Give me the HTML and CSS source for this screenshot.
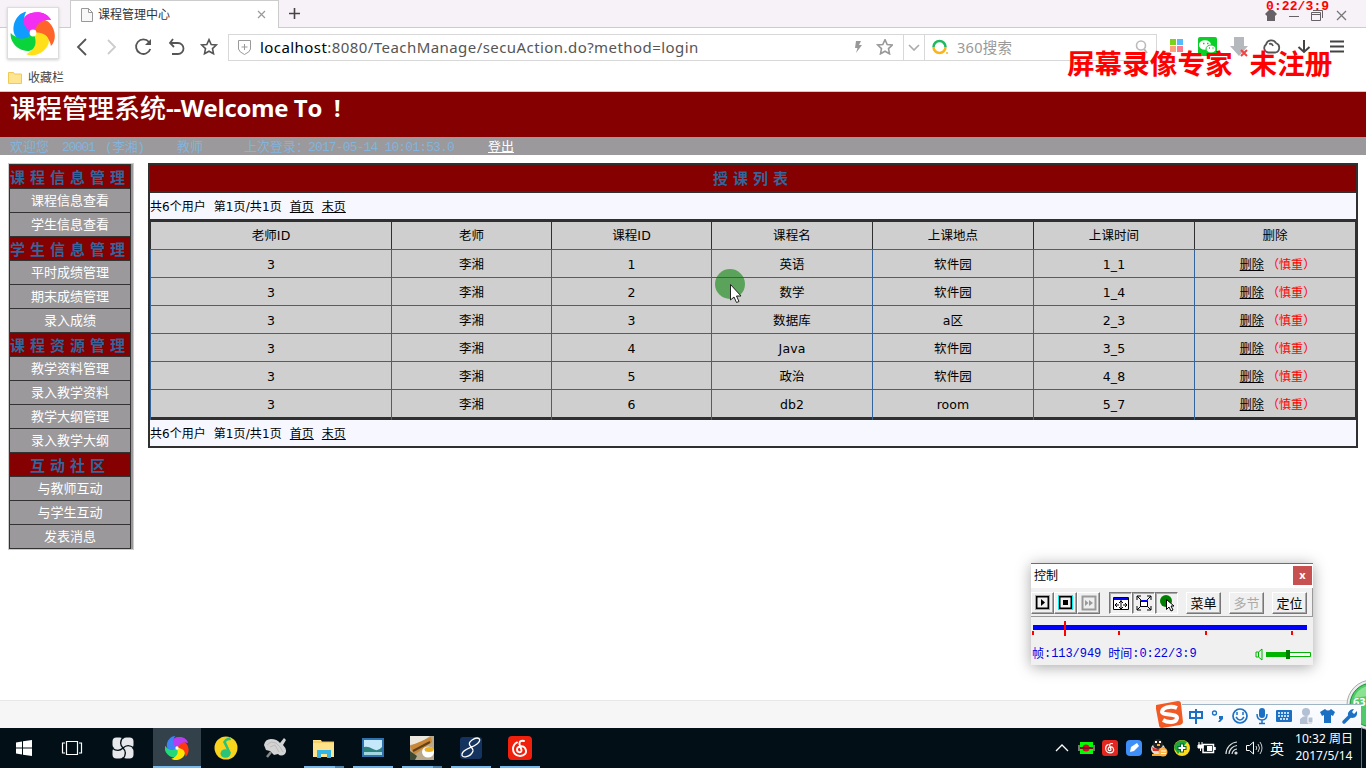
FILE: index.html
```html
<!DOCTYPE html>
<html lang="zh-CN">
<head>
<meta charset="utf-8">
<title>课程管理中心</title>
<link rel="stylesheet" href="styles.css">
</head>
<body>
<svg class="defs" aria-hidden="true">
  <defs>
    <path id="petal" d="M0 0C-8-3-13-13-6-18C2-23 14-21 18-13C10-15 4-9 0 0Z"/>
    <path id="star" d="M0-7.3L2.2-2.5L7.3-2L3.5 1.6L4.5 6.8L0 4.2L-4.5 6.8L-3.5 1.6L-7.3-2L-2.2-2.5Z" fill="none" stroke-width="1.6"/>
    <g id="note"><path d="M4-7C-1-8-1-5 0-2L1.500 2C2 5-3 5-3 1.500C-3-2 3-3 5 0C8 5 4 8 0 8C-5 8-7 4-7 1C-7-2-5-5-3-5.500" fill="none" stroke="#fff" stroke-width="1.900" stroke-linecap="round"/></g>
  </defs>
</svg>

<header class="browser">
  <div class="logo">
    <svg width="46" height="46" viewBox="-23 -23 46 46">
      <use href="#petal" fill="#ff22ee"/><use href="#petal" fill="#ff6428" transform="rotate(72)"/>
      <use href="#petal" fill="#ffe01b" transform="rotate(144)"/>
      <use href="#petal" fill="#09d43c" transform="rotate(216)"/><use href="#petal" fill="#109cff" transform="rotate(288)"/>
      <path d="M0 0C-8-3-13-13-6-18C2-23 14-21 18-13Q6-15 0 0Z" fill="#f22ef3"/><circle r="3.400" fill="#fff"/>
    </svg>
  </div>
  <div class="tabstrip">
    <div class="tab">
      <svg width="12" height="14" viewBox="0 0 12 14"><path d="M.5.500H7.500L11.500 4.500V13.500H.500ZM7.500.500V4.500H11.500" fill="#f8f8f8" stroke="#999"/></svg>
      <span class="tab-title">课程管理中心</span>
      <svg class="tab-close" width="9" height="9" viewBox="0 0 9 9"><path d="M1 1L8 8M8 1L1 8" stroke="#999" stroke-width="1.200"/></svg>
    </div>
    <svg class="plus" width="11" height="11" viewBox="0 0 11 11"><path d="M5.500 0V11M0 5.500H11" stroke="#444" stroke-width="1.600"/></svg>
    <div class="winctl">
      <svg width="80" height="12" viewBox="0 0 80 12"><path d="M4 0H8L12 4L10 6V11H2V6L0 4Z" fill="#656167"/><path d="M24 6.500H34M46.500 2.500H55.500V10.500H46.500ZM46.500 4.500H55M48 .500H57.500V8" fill="none" stroke="#656167"/><path d="M72 1L81 10M81 1L72 10" stroke="#777" stroke-width="1.300"/></svg>
    </div>
  </div>
  <div class="navrow">
    <svg class="navicons" width="144" height="20" viewBox="0 0 144 20" fill="none" stroke="#555" stroke-width="1.800">
      <path d="M10 2L2 10L10 18"/><path d="M32 3L39 10L32 17" stroke="#ccc"/>
      <path d="M73 5A7.300 7.300 0 1 0 74.300 12"/><path d="M75 2V8H69Z" fill="#555" stroke="none"/>
      <path d="M97 2L94 6L98 10M94 6H102A5.500 5.500 0 0 1 102 17H96"/>
      <use href="#star" x="133" y="10"/>
    </svg>
    <div class="address">
      <svg width="13" height="15" viewBox="0 0 13 15"><path d="M.5.500H12.500V9Q12 12 6.500 14.500Q1 12 .500 9ZM6.500 4V10M3.500 7H9.500" fill="none" stroke="#999"/></svg>
      <span class="url">localhost<i>:8080/TeachManage/secuAction.do?method=login</i></span>
      <svg class="addr-icons" width="40" height="16" viewBox="0 0 40 16"><path d="M3 2H8L6 6H9L3 14L4.500 9H2Z" fill="#999"/><use href="#star" x="32" y="8" stroke="#999"/></svg>
      <div class="drop"><svg width="12" height="7" viewBox="0 0 12 7"><path d="M1 1L6 6L11 1" fill="none" stroke="#aaa" stroke-width="1.600"/></svg></div>
      <svg class="so" width="17" height="16" viewBox="0 0 17 16" fill="none" stroke-width="2.500"><path d="M1.500 8A6 6 0 0 1 13.500 8" stroke="#20b960"/><path d="M13.500 8A6 6 0 0 1 1.500 8" stroke="#fbb51b"/><circle cx="15" cy="14" r="1" fill="#fbb51b" stroke="none"/></svg>
      <span class="search">360搜索</span>
      <svg class="mag" width="13" height="14" viewBox="0 0 13 14"><circle cx="6" cy="5.500" r="4.500" fill="none" stroke="#bbb" stroke-width="1.600"/><path d="M9 9L12 13" stroke="#bbb" stroke-width="2"/></svg>
    </div>
    <svg class="ext" width="176" height="22" viewBox="0 0 176 22">
      <path d="M1 3H7V9H1Z" fill="#79d31b"/><path d="M8 3H14V9H8Z" fill="#56baff"/><path d="M1 10H7V16H1Z" fill="#ffa37c"/><path d="M8 10H14V16H8Z" fill="#ff7a8c"/>
      <rect x="29" y="1" width="19" height="19" rx="2" fill="#0bcf28"/><ellipse cx="36" cy="9" rx="6" ry="4.800" fill="#fff"/><ellipse cx="42" cy="13" rx="5" ry="4" fill="#fff" stroke="#0bcf28"/><path d="M34 7.500H35.500M38 7.500H39.500M40 12H41M43.500 12H44.500" stroke="#0bcf28" stroke-width="1.500"/>
      <path d="M65 1H75V10H79L70 20L61 10H65Z" fill="#b5b9bd"/><path d="M72 14L78 20M78 14L72 20" stroke="#e44" stroke-width="2"/>
      <path d="M99 16.500A4.500 4.500 0 0 1 97 8.500A5.500 5.500 0 0 1 107 7A5 5 0 0 1 106.500 16.500ZM100 8Q103 7 104 10" fill="none" stroke="#555" stroke-width="1.800"/>
      <path d="M135 4V16M129.500 11L135 16L140.500 11" fill="none" stroke="#444" stroke-width="2"/>
      <path d="M161 5.500H175M161 10.500H175M161 15.500H175" stroke="#444" stroke-width="2"/>
    </svg>
  </div>
  <div class="bookmarks">
    <svg width="14" height="12" viewBox="0 0 14 12"><path d="M.500.500H5.500L6.500 2H13.500V11.500H.500Z" fill="#ffe491" stroke="#f0c956"/></svg>
    <span>收藏栏</span>
  </div>
  <div class="timer">0:22/3:9</div>
  <div class="watermark"><span>屏幕录像专家</span><span>未注册</span></div>
</header>

<div class="title"><h1>课程管理系统<b>--Welcome To</b><em>!</em></h1></div>
<div class="userbar"><span class="u1">欢迎您</span><span class="u2">20001</span><span class="u3">(李湘)</span><span class="u4">教师</span><span class="u5">上次登录：</span><span class="u6">2017-05-14 10:01:53.0</span><a>登出</a></div>

<main class="body">
  <nav class="side"><div class="side-in">
    <h2>课程信息管理</h2><a>课程信息查看</a><a>学生信息查看</a>
    <h2>学生信息管理</h2><a>平时成绩管理</a><a>期末成绩管理</a><a>录入成绩</a>
    <h2>课程资源管理</h2><a>教学资料管理</a><a>录入教学资料</a><a>教学大纲管理</a><a>录入教学大纲</a>
    <h2>互动社区</h2><a>与教师互动</a><a>与学生互动</a><a>发表消息</a>
  </div></nav>
  <section class="panel">
    <h2>授课列表</h2>
    <div class="pager"><span>共6个用户</span><span>第1页/共1页</span><u>首页</u><u>末页</u></div>
    <div class="grid">
      <div class="row head"><span>老师ID</span><span>老师</span><span>课程ID</span><span>课程名</span><span>上课地点</span><span>上课时间</span><span>删除</span></div>
      <div class="row"><span>3</span><span>李湘</span><span>1</span><span>英语</span><span>软件园</span><span>1_1</span><span><u>删除</u><em>（慎重）</em></span></div>
      <div class="row"><span>3</span><span>李湘</span><span>2</span><span>数学</span><span>软件园</span><span>1_4</span><span><u>删除</u><em>（慎重）</em></span></div>
      <div class="row"><span>3</span><span>李湘</span><span>3</span><span>数据库</span><span>a区</span><span>2_3</span><span><u>删除</u><em>（慎重）</em></span></div>
      <div class="row"><span>3</span><span>李湘</span><span>4</span><span>Java</span><span>软件园</span><span>3_5</span><span><u>删除</u><em>（慎重）</em></span></div>
      <div class="row"><span>3</span><span>李湘</span><span>5</span><span>政治</span><span>软件园</span><span>4_8</span><span><u>删除</u><em>（慎重）</em></span></div>
      <div class="row"><span>3</span><span>李湘</span><span>6</span><span>db2</span><span>room</span><span>5_7</span><span><u>删除</u><em>（慎重）</em></span></div>
    </div>
    <div class="pager"><span>共6个用户</span><span>第1页/共1页</span><u>首页</u><u>末页</u></div>
  </section>
</main>

<svg class="pointer" width="32" height="36" viewBox="0 0 32 36"><circle cx="15" cy="15" r="15" fill="rgba(0,128,0,.56)"/><path d="M15.500 15.500V31L19 28L21.500 33.500L24 32.500L21.500 27H26Z" fill="#fff" stroke="#222"/></svg>

<aside class="control">
  <div class="ctl-title"><span>控制</span><b>x</b></div>
  <div class="ctl-tools">
    <i class="btn"><svg width="15" height="15"><rect x=".5" y=".5" width="14" height="14" fill="#f0f0f0" stroke="#0ee"/><rect x="1.750" y="1.750" width="11.500" height="11.500" fill="none" stroke="#000" stroke-width="1.500"/><path d="M6 4L10 7.500L6 11Z"/></svg></i>
    <i class="btn"><svg width="15" height="15"><rect x=".5" y=".5" width="14" height="14" fill="#f0f0f0" stroke="#0ee"/><rect x="1.750" y="1.750" width="11.500" height="11.500" fill="none" stroke="#000" stroke-width="1.500"/><path d="M5 5H10V10H5Z"/></svg></i>
    <i class="btn"><svg width="16" height="16"><rect x="1.500" y="1.500" width="13" height="13" fill="#eee" stroke="#999" stroke-width="2"/><path d="M4 5L7.500 8L4 11ZM8 5L12 8L8 11Z" fill="#999"/></svg></i>
    <i class="btn down gap"><svg width="16" height="14"><path d="M.500 1.500H15.500V13.500H.500Z" fill="#fff" stroke="#000"/><path d="M1 2H15V4H1Z" fill="#00f"/><path d="M2 9H6M10 9H14M8 4V13M4 7L2 9L4 11M12 7L14 9L12 11M6 7L8 5L10 7M6 11L8 13L10 11" fill="none" stroke="#000"/></svg></i>
    <i class="btn down"><svg width="16" height="16"><path d="M1 5V1H5M11 1H15V5M15 11V15H11M5 15H1V11M1 1L5 5M15 1L11 5M1 15L5 11M15 15L11 11" fill="none" stroke="#000"/><path d="M4.500 5.500H11.500V11.500H4.500Z" fill="#fff" stroke="#000"/><path d="M5 5H11V7H5Z" fill="#00f"/></svg></i>
    <i class="btn down"><svg width="18" height="18"><circle cx="8" cy="7" r="6" fill="green"/><path d="M8.500 5.500V15.500L11 13L13 17L15 16L13 12H16Z" fill="#fff" stroke="#000"/></svg></i>
    <i class="btn wide">菜单</i><i class="btn wide off">多节</i><i class="btn wide">定位</i>
  </div>
  <svg class="track" width="282" height="19" viewBox="0 0 282 19"><path d="M2 8H276V13H2Z" fill="#00f"/><path d="M33 4H35V19H33ZM1 14H3V18H1ZM87 14H89V18H87ZM174 14H176V18H174ZM260 14H262V18H260Z" fill="red"/></svg>
  <div class="ctl-foot"><span>帧</span><code>:113/949</code><span class="tm">时间</span><code>:0:22/3:9</code>
    <svg width="56" height="13" viewBox="0 0 56 13"><path d="M1 4H3.500V9H1ZM3.500 4L7 1V12L3.500 9" fill="none" stroke="#00b400"/><path d="M11 4H33V9H11Z" fill="#00b400"/><path d="M33 4.500H55.500V8.500H33" fill="#fff" stroke="#00b400"/><path d="M31 2H35V11H31Z" fill="#008000"/></svg>
  </div>
</aside>

<svg class="ball" width="20" height="52" viewBox="0 0 20 52"><circle cx="26" cy="26" r="25" fill="#eee" stroke="#aaa"/><circle cx="26" cy="26" r="22" fill="#50ca68" stroke="#189333"/><path d="M8 19A19 19 0 0 1 22 7V17Z" fill="#8be391"/><text x="7" y="27" class="ball-text">63</text></svg>
<div class="status"></div>
<div class="ime">
  <svg width="206" height="30" viewBox="0 0 206 30">
    <path d="M1 5L23 1Q26 1 26 4L28 22Q28 24 25 25L7 28Q4 28 4 25L1 9Z" fill="#f15a24"/><path d="M22 8C15 5 7 8 7 12C8 16 22 13 22 18C21 23 13 23 8 20" fill="none" stroke="#fff" stroke-width="4"/>
    <path d="M35 12H47V18H35ZM41 9V24" fill="none" stroke="#1c70c4" stroke-width="2"/>
    <circle cx="59.500" cy="13" r="2" fill="none" stroke="#1c70c4" stroke-width="1.300"/><path d="M64 16H68V19L65 22H63L65 19H64Z" fill="#1c70c4"/>
    <circle cx="85" cy="16" r="7" fill="none" stroke="#1c70c4" stroke-width="1.700"/><path d="M82 12V15M88 12V15M81 17Q85 23 89 17" fill="none" stroke="#1c70c4" stroke-width="1.500"/>
    <rect x="104" y="8" width="6" height="10" rx="3" fill="#1c70c4"/><path d="M102 14Q102 20 107 20Q112 20 112 14M107 20V24M104 23.500H110" fill="none" stroke="#1c70c4" stroke-width="1.500"/>
    <rect x="121" y="10" width="16" height="12" rx="1" fill="#1c70c4"/><path d="M123 13H135M123 16H135M125 19H133" stroke="#fff" stroke-width="1.500" stroke-dasharray="2 1"/>
    <circle cx="151" cy="12" r="4" fill="#b3bfd3"/><path d="M145 24V19Q151 13 157 19V24Z" fill="#b3bfd3"/><path d="M153 17H158V23H153Z" fill="#b3bfd3" stroke="#fff"/>
    <path d="M170 9Q173 12 176 9L180 12L178 16L176 15V23H169V15L167 16L165 12Z" fill="#1c70c4"/>
    <path d="M189 22L196 15" stroke="#1c70c4" stroke-width="3.500" stroke-linecap="round"/><path d="M199 9L197 12L199 14L202 11Q203 18 197 18Q192 17 193 13Q195 9 199 9Z" fill="#1c70c4"/>
  </svg>
</div>

<footer class="taskbar">
  <div class="task"><svg viewBox="-12 -12 24 24"><path d="M-8-5.500L-2-6.500V-.500H-8ZM-1-6.700L8-8V-.500H-1ZM-8 .500H-2V6.500L-8 5.500ZM-1 .500H8V8L-1 6.700Z" fill="#fff"/></svg></div>
  <div class="task"><svg viewBox="-12 -12 24 24" fill="none" stroke="#fff" stroke-width="1.200"><path d="M-5.500-6.500H5.500V6.500H-5.500ZM-7-5H-9.500V5H-7M7-5H9.500V5H7"/></svg></div>
  <div class="task t3"><svg viewBox="-12 -12 24 24" fill="#e7e8ec"><rect x="-10.500" y="-10.500" width="11" height="11" rx="4"/><rect x="-.5" y="-10.500" width="11" height="11" rx="4"/><rect x="-10.500" y="-.5" width="11" height="11" rx="4"/><rect x="-.5" y="-.5" width="11" height="11" rx="4"/><path d="M0 0C-3-3-3-7 0-11M0 0C3-3 7-3 11 0M0 0C3 3 3 7 0 11M0 0C-3 3-7 3-11 0" fill="none" stroke="#020f17" stroke-width="1.300"/></svg></div>
  <div class="task active"><svg viewBox="-22 -22 44 44"><g transform="rotate(10)"><use href="#petal" fill="#b83df0"/><use href="#petal" fill="#ff3811" transform="rotate(72)"/><use href="#petal" fill="#ffe500" transform="rotate(144)"/><use href="#petal" fill="#22d878" transform="rotate(216)"/><use href="#petal" fill="#3d83f5" transform="rotate(288)"/><path d="M0 0C-8-3-13-13-6-18C2-23 14-21 18-13Q6-15 0 0Z" fill="#b83df0"/></g><circle r="3" fill="#fff"/></svg></div>
  <div class="task"><svg viewBox="-12 -12 24 24"><circle r="11.500" fill="#f9d31c"/><ellipse cx="-.5" cy="5.500" rx="5" ry="4.300" fill="#2bc37a"/><path d="M3 6L-3-6Q-1-10 4-11L5-8Q1-8 0-6L5 5Z" fill="#2bc37a"/></svg></div>
  <div class="task"><svg viewBox="-12 -12 24 24"><path d="M-11-3Q-10-9-4-9Q2-9 5-5L9-10L11-8L8-3Q13 2 10 6Q6 9 3 6L-1 7L-5 3L-9 2Z" fill="#d4d3d3"/><path d="M-8-3L-4-6L1-5L5-1L8 4M-5-1L0-3L4 4" fill="none" stroke="#bbb"/><path d="M-4 4L-8 9" stroke="#888" stroke-width="2.500"/></svg></div>
  <div class="task run split"><svg viewBox="-12 -12 24 24"><path d="M-11-8H-3L-2-6H10V9H-11Z" fill="#ffe38a"/><path d="M-11-6H10" stroke="#f0bd48"/><path d="M-7 10V2H7V10H3V6H-3V10Z" fill="#35b4e8"/></svg></div>
  <div class="task run"><svg viewBox="-12 -12 24 24"><path d="M-11-10H11V9H-11Z" fill="#2e73ae"/><path d="M-9-8H9V7H-9Z" fill="#c6e8fb"/><path d="M-9-1Q-5-2 0 1T9-1V7H-9Z" fill="#2d827d"/><path d="M-9 4H9V7H-9Z" fill="#a4d6df"/></svg></div>
  <div class="task run split"><svg viewBox="-12 -12 24 24"><path d="M-12-12H12V12H-12Z" fill="#b9a889"/><path d="M-12-12H8L-2-5L-12-3Z" fill="#ece8df"/><path d="M-12-2L9-11L10-6L-8 7Z" fill="#ca8735"/><path d="M-9 3L8-6" stroke="#62401d" stroke-width="2"/><ellipse cx="6" cy="4" rx="6" ry="5.500" fill="#fff"/><ellipse cx="7" cy="1.500" rx="4.500" ry="2.500" fill="#e9b024"/><path d="M-12 3L-5 8L-7 12H-12Z" fill="#3d4932"/></svg></div>
  <div class="task run"><svg viewBox="-12 -12 24 24"><rect x="-11" y="-11" width="22" height="22" rx="3" fill="#14335e"/><path d="M6-4C12-9 7-12 1-8C-6-3 3-1 2 3C0 9-10 11-9 6C-8 1 1 0 6-4Z" fill="none" stroke="#fff" stroke-width="1.300"/></svg></div>
  <div class="task run"><svg viewBox="-12 -12 24 24"><rect x="-12" y="-12" width="24" height="24" rx="4" fill="#f1200c"/><use href="#note"/></svg></div>
  <div class="tray">
    <svg width="210" height="24" viewBox="0 0 210 24">
      <path d="M2 15L8 9L14 15" fill="none" stroke="#fff" stroke-width="1.300"/>
      <path d="M24 9H41V15H24Z" fill="#777"/><path d="M26 6H39V18H26Z" fill="#0f0"/><circle cx="32" cy="12" r="3.500" fill="#e2002d"/><path d="M26 12H39" stroke="#7a1025" stroke-width="2"/>
      <rect x="48" y="4" width="16" height="16" rx="3" fill="#e12720"/><use href="#note" transform="translate(56 12) scale(.62)"/>
      <rect x="72" y="4" width="16" height="16" rx="4" fill="#3e8ff7"/><path d="M76 16L77 11L83 7L85 10L80 15Z" fill="#fff"/>
      <ellipse cx="104" cy="13" rx="7" ry="6" fill="#ddd"/><circle cx="104" cy="8" r="5" fill="#222"/><path d="M101 6H103M105 6H107" stroke="#fff" stroke-width="2"/><path d="M98 11Q104 15 110 11L109 15H99Z" fill="#e52b1c"/><path d="M98 19H110M103 9H106" stroke="#f9a728" stroke-width="2"/><circle cx="109" cy="16" r="4.500" fill="#ffb347"/><path d="M107 15H112M107 17.500H112" stroke="#fff"/>
      <circle cx="128" cy="12" r="8" fill="#ffd91c"/><path d="M120 12A8 8 0 0 1 133 6L124 18Z" fill="#1ca83a"/><path d="M128 7.500V16.500M123.500 12H132.500" stroke="#063" stroke-width="4"/><path d="M128 8.500V15.500M124.500 12H131.500" stroke="#fff" stroke-width="2"/>
      <path d="M149 8.500H159.500V16.500H149ZM161 11V14" fill="none" stroke="#fff" stroke-width="1.500"/><path d="M153 10H158V15H153Z" fill="#fff"/><path d="M145 6V9M148 6V9M144 9H149V12H144ZM146.500 12V15" stroke="#fff" fill="#fff"/>
      <g fill="none" stroke="#ddd" stroke-width="1.200"><path d="M172 18A12 12 0 0 1 183 6M175 18A9 9 0 0 1 183 9.500M178 18A6 6 0 0 1 183 13"/><circle cx="182" cy="17" r="1" fill="#fff"/></g>
      <path d="M192.500 9.500H195.500L199.500 6V18L195.500 14.500H192.500Z" fill="none" stroke="#fff"/><path d="M202 10Q203.500 12 202 14M204 8Q207 12 204 16M206 6Q210 12 206 18" fill="none" stroke="#ccc"/>
    </svg>
    <span class="lang">英</span>
    <div class="clock"><span>10:32 周日</span><span>2017/5/14</span></div>
    <div class="peek"></div>
  </div>
</footer>
</body>
</html>
```
FILE: styles.css
```css
* { box-sizing: border-box; }
body { margin: 0; width: 1366px; height: 768px; overflow: hidden; position: relative; display: flex; flex-direction: column; background: #fff; color: #000; font: 12px/16px "Noto Sans", "Noto Sans CJK SC", sans-serif; white-space: nowrap; }
svg { flex: none; display: block; }
i, em { font-style: normal; }
h1, h2 { margin: 0; }
.defs { position: absolute; width: 0; height: 0; }

.browser { position: relative; height: 92px; flex: none; border-bottom: 1px solid #ccc; }
.logo { position: absolute; z-index: 2; left: 7px; top: 7px; width: 52px; height: 52px; padding: 2px; background: #fff; border: 1px solid #ddd; box-shadow: 0 1px 3px #ccc; }
.tabstrip { display: flex; align-items: center; height: 28px; background: #f7f2f7; border-bottom: 1px solid #ccc; padding-left: 70px; }
.tab { display: flex; align-items: center; width: 209px; height: 28px; background: #fff; border: 1px solid #ccc; border-bottom: 0; padding: 1px 12px 0 10px; }
.tab-title { margin-left: 5px; color: #333; }
.tab-close { margin-left: auto; }
.plus { margin-left: 10px; }
.winctl { margin: 4px 21px 0 auto; }
.winctl svg { overflow: visible; }
.navrow { display: flex; align-items: center; height: 38px; padding-left: 76px; }
.address { display: flex; align-items: center; width: 929px; height: 27px; margin-left: 8px; border: 1px solid #d8d8d8; padding-left: 9px; }
.url { width: 480px; margin-left: 9px; font-size: 15px; line-height: 20px; letter-spacing: .435px; }
.url i { color: #555; }
.addr-icons { margin-left: 113px; }
.drop { display: flex; align-items: center; justify-content: center; width: 22px; height: 25px; margin-left: 10px; border: solid #d8d8d8; border-width: 0 1px; }
.so { margin-left: 7px; }
.search { margin-left: 8px; color: #999; font-size: 14.500px; line-height: 20px; letter-spacing: .300px; }
.mag { margin: 0 8px 0 auto; }
.ext { margin-left: 12px; }
.bookmarks { display: flex; align-items: center; height: 23px; padding-left: 8px; gap: 6px; color: #444; }
.timer { position: absolute; left: 1266px; top: -1px; color: red; font: bold 13px/16px "Liberation Mono", monospace; letter-spacing: .1px; }
.watermark { position: absolute; left: 1067px; top: 46px; display: flex; gap: 17px; color: red; font: bold 27.600px/32px "Noto Sans CJK SC", sans-serif; }

.title { flex: none; height: 45px; background: #850000; padding-left: 10px; color: #fff; }
.title h1 { display: flex; font: 500 26px/29px "Noto Sans CJK SC", sans-serif; }
.title b { font: bold 24px/32px "Open Sans", sans-serif; letter-spacing: -.350px; }
.title em { font: bold 23px/32px "Open Sans", sans-serif; margin-left: 12px; }
.userbar { display: flex; flex: none; height: 18px; background: #9b999b; color: #82b4dc; font: 13px/18px "Liberation Mono", "Noto Sans CJK SC", monospace; padding: 2px 0 0 10px; letter-spacing: -1.300px; }
.userbar span { flex: none; }
.userbar .u1, .userbar .u4, .userbar .u5 { letter-spacing: 0; }
.u1 { width: 52px; }
.u2 { width: 43px; }
.u3 { width: 72px; letter-spacing: -.500px; }
.u4 { width: 67px; }
.u5 { width: 64px; }
.u6 { width: 180px; letter-spacing: -.850px; }
.userbar a { color: #fff; letter-spacing: 0; text-decoration: underline; }

.body { display: flex; align-items: flex-start; flex: 1; padding: 8px 8px 0; gap: 14px; }
.side { width: 126px; flex: none; background: #9b999b; border: 1px solid #ccc; }
.side-in { width: 122px; border: 1px solid #333; border-bottom: 0; }
.side h2, .side a { display: block; height: 24px; border-bottom: 1px solid #333; text-align: center; }
.side h2 { background: #850000; color: #33649a; font: bold 15px/23px "Noto Sans CJK SC", sans-serif; letter-spacing: 5px; }
.side a { color: #fff; font: 13px/22px "Noto Sans CJK SC", sans-serif; }
.panel { width: 1210px; flex: none; border: 2px solid #303030; font: 13px/26px "DejaVu Sans", "Noto Sans CJK SC", sans-serif; }
.panel h2 { height: 28px; border-bottom: 2px solid #303030; background: #850000; color: #33649a; text-align: center; font: bold 15px/26px "Noto Sans CJK SC", sans-serif; letter-spacing: 5px; }
.pager { display: flex; gap: 8px; height: 26px; line-height: 29px; background: #f7f7ff; font-size: 12px; }
.pager span:nth-child(2) { letter-spacing: .120px; }
.grid { border: solid #303030; border-width: 3px 1px 3px 0; background: #cfcfcf; }
.row { display: grid; grid-template-columns: 241px 160px 160px 161px 161px 161px 161px; height: 28px; line-height: 29px; text-align: center; border-top: 1px solid #33649a; }
.row.head { height: 27px; line-height: 27px; border-top: 0; }
.row > span { border-left: 1px solid #33649a; font-size: 12.500px; letter-spacing: .100px; }
.row.head > span { border-color: #303030; }
.row em { color: red; font-size: 12px; margin-left: 3px; }
.row u { font-size: 12px; margin-left: 5px; }

.pointer { position: absolute; left: 715px; top: 269px; }
.control { position: absolute; left: 1031px; top: 563px; width: 282px; height: 102px; background: #f0f0f0; border-top: 1px solid #2581ca; box-shadow: 0 2px 14px rgba(0,0,0,.35); }
.ctl-title { display: flex; align-items: center; justify-content: space-between; height: 24px; padding: 0 1px 0 3px; background: #fff; }
.ctl-title b { width: 19px; height: 19px; margin-top: -1px; background: #c75050; color: #fff; text-align: center; font-size: 11px; line-height: 17px; }
.ctl-tools { display: flex; align-items: center; height: 29px; padding-top: 1px; border: solid #999; border-width: 0 1px 1px 0; }
.btn { display: flex; align-items: center; justify-content: center; width: 23px; height: 22px; flex: none; border: 1px solid; border-color: #fff #777 #777 #fff; box-shadow: inset -1px -1px #aaa; }
.btn.down { border-color: #777 #fff #fff #777; box-shadow: inset 1px 1px #aaa; }
.btn.gap { margin-left: 9px; }
.btn.wide { width: 35px; margin-left: 8px; font: 13px/20px "Noto Sans CJK SC", sans-serif; }
.btn.off { color: #aaa; }
.ctl-foot { display: flex; align-items: center; height: 26px; margin-top: 5px; padding: 0 2px 0 1px; color: #0000e0; font-size: 12px; }
.ctl-foot code { font: 12px/16px "Liberation Mono", monospace; letter-spacing: -.050px; }
.ctl-foot .tm { margin-left: 7px; }
.ctl-foot svg { margin-left: auto; }

.ball { position: absolute; left: 1346px; top: 679px; z-index: 1; }
.ball-text { fill: #fff; font: bold 11px "Noto Sans", sans-serif; }
.status { flex: none; height: 28px; background: #f6f6f6; border-top: 1px solid #e8e8e8; }
.ime { position: absolute; z-index: 2; left: 1155px; top: 700px; width: 206px; height: 28px; background: linear-gradient(#9fb5c5, #9fb5c5) 27px 4px / 179px 1px no-repeat, linear-gradient(#fcfdff, #f3f8fd) 27px 4px / 179px 24px no-repeat; }
.taskbar { display: flex; flex: none; height: 40px; background: #020f17; position: relative; }
.task { display: flex; align-items: center; justify-content: center; width: 48px; height: 40px; flex: none; }
.task svg { width: 24px; height: 24px; }
.t3 { width: 53px; margin-right: 4px; }
.active { background: #32414a linear-gradient(#76b9ed, #76b9ed) 0 38px / 48px 2px no-repeat; }
.task + .task.active ~ .task { margin-left: 1px; }
.run { background: linear-gradient(#76b9ed, #76b9ed) 4px 38px / 40px 2px no-repeat; }
.run.split { background: linear-gradient(90deg, #76b9ed 31px, #4d82aa 31px) 4px 38px / 40px 2px no-repeat; }
.tray { display: flex; align-items: center; margin-left: auto; color: #fff; }
.lang { width: 31px; padding-left: 6px; font: 14px/20px "Noto Sans CJK SC", sans-serif; }
.clock { display: flex; flex-direction: column; align-items: center; width: 60px; margin-left: -1px; padding-bottom: 2px; font-size: 12px; line-height: 17px; letter-spacing: 0; }
.peek { width: 5px; height: 40px; margin-left: 7px; border-left: 1px solid #66727a; }
```
